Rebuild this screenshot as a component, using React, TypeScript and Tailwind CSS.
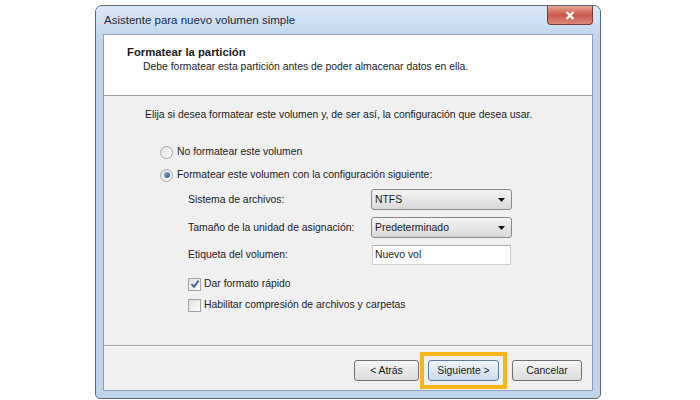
import React from "react";

const font = { fontFamily: '"Liberation Sans", Arial, sans-serif' };

function Radio({ checked }: { checked?: boolean }) {
  return (
    <div className="w-[13px] h-[13px] rounded-full border border-[#a3a5a7] bg-gradient-to-br from-[#e2e2e2] to-[#fcfcfc] flex items-center justify-center shrink-0">
      {checked && <div className="w-[6px] h-[6px] rounded-full bg-gradient-to-br from-[#8db2d3] to-[#24537f]" />}
    </div>
  );
}

function Checkbox({ checked }: { checked?: boolean }) {
  return (
    <div className="w-[13px] h-[13px] border border-[#a3a5a7] bg-gradient-to-br from-[#e0e0e0] to-[#fcfcfc] flex items-center justify-center shrink-0">
      {checked && (
        <svg width="10" height="10" viewBox="0 0 10 10">
          <path d="M1.5 5.2 L4 7.8 L8.6 1.6" fill="none" stroke="#3f5f98" strokeWidth="1.8" />
        </svg>
      )}
    </div>
  );
}

function Combo({ value }: { value: string }) {
  return (
    <div className="w-[141px] h-[21px] rounded-[3px] border border-[#8a8a8a] bg-gradient-to-b from-[#f4f4f4] to-[#d9d9d9] flex items-center justify-between pl-[3px] pr-[6px]">
      <span>{value}</span>
      <svg width="7" height="4" viewBox="0 0 7 4">
        <path d="M0 0 H7 L3.5 4 Z" fill="#111" />
      </svg>
    </div>
  );
}

function Button({ label, active, w }: { label: string; active?: boolean; w: string }) {
  return (
    <div
      className={`${w} h-[21px] rounded-[3px] border flex items-center justify-center ${
        active
          ? "border-[#5d7d9c] bg-gradient-to-b from-[#eef5fb] to-[#c9dcec]"
          : "border-[#707070] bg-gradient-to-b from-[#f5f5f5] to-[#dcdcdc]"
      }`}
    >
      {label}
    </div>
  );
}

export default function App() {
  return (
    <div className="w-[700px] h-[400px] bg-white overflow-hidden pt-[5px] pl-[95px] text-[10.4px] text-[#1b1b1b]" style={font}>
      <div className="w-[506px] h-[394px] rounded-t-[7px] rounded-b-[5px] border border-[#5d6877] bg-[#bfd5ec] flex flex-col px-[7px] pb-[7px]">
        {/* title bar */}
        <div className="h-[28px] flex items-start justify-between -mx-[7px] px-[7px] rounded-t-[6px] bg-gradient-to-b from-[#dbe9f7] to-[#c3d8ee]">
          <span className="pt-[7px] pl-[1px] text-[11.5px] leading-[14px] text-[#1d2a3a]">Asistente para nuevo volumen simple</span>
          <div className="w-[46px] h-[19px] rounded-b-[4px] border border-t-0 border-[#7d3a32] bg-gradient-to-b from-[#e9a594] via-[#c9574a] to-[#d98a78] flex items-center justify-center">
            <svg width="10" height="9" viewBox="0 0 10 9">
              <path d="M1.5 1 L8.5 8 M8.5 1 L1.5 8" stroke="#fff" strokeWidth="2.2" />
            </svg>
          </div>
        </div>

        {/* client */}
        <div className="flex-1 border border-[#8ea3bb] bg-[#f0f0f0] flex flex-col">
          <div className="h-[61px] bg-white border-b border-[#a0a0a0] pt-[10px] pl-[23px]">
            <div className="font-bold text-[11.3px] leading-[14px]">Formatear la partición</div>
            <div className="pl-[16px] mt-[1px] leading-[14px]">Debe formatear esta partición antes de poder almacenar datos en ella.</div>
          </div>

          <div className="flex-1 border-b border-[#a0a0a0] pt-[12px]">
            <div className="pl-[41px] leading-[14px]">Elija si desea formatear este volumen y, de ser así, la configuración que desea usar.</div>

            <div className="pl-[56px] mt-[20px] h-[20px] flex items-center gap-[4px]">
              <Radio />
              <span>No formatear este volumen</span>
            </div>
            <div className="pl-[56px] mt-[3px] h-[20px] flex items-center gap-[4px]">
              <Radio checked />
              <span>Formatear este volumen con la configuración siguiente:</span>
            </div>

            <div className="pl-[84px] mt-[4px] h-[21px] flex items-center">
              <span className="w-[183px]">Sistema de archivos:</span>
              <Combo value="NTFS" />
            </div>
            <div className="pl-[84px] mt-[7px] h-[21px] flex items-center">
              <span className="w-[183px]">Tamaño de la unidad de asignación:</span>
              <Combo value="Predeterminado" />
            </div>
            <div className="pl-[84px] mt-[6px] h-[21px] flex items-center">
              <span className="w-[184px]">Etiqueta del volumen:</span>
              <div className="w-[139px] h-[20px] bg-white border border-[#c9ccd2] border-t-[#abadb3] flex items-center pl-[2px]">Nuevo vol</div>
            </div>

            <div className="pl-[84px] mt-[9px] h-[20px] flex items-center gap-[3px]">
              <Checkbox checked />
              <span>Dar formato rápido</span>
            </div>
            <div className="pl-[84px] mt-[1px] h-[20px] flex items-center gap-[3px]">
              <Checkbox />
              <span>Habilitar compresión de archivos y carpetas</span>
            </div>
          </div>

          <div className="h-[44px] border-t border-white flex items-center justify-end pr-[10px] pt-[4px]">
            <Button label="< Atrás" w="w-[65px]" />
            <div className="ml-[1px] border-[4px] border-[#f6b51a] px-[4px] py-[4px]">
              <Button label="Siguiente >" active w="w-[71px]" />
            </div>
            <div className="ml-[5px]">
              <Button label="Cancelar" w="w-[70px]" />
            </div>
          </div>
        </div>
      </div>
    </div>
  );
}
